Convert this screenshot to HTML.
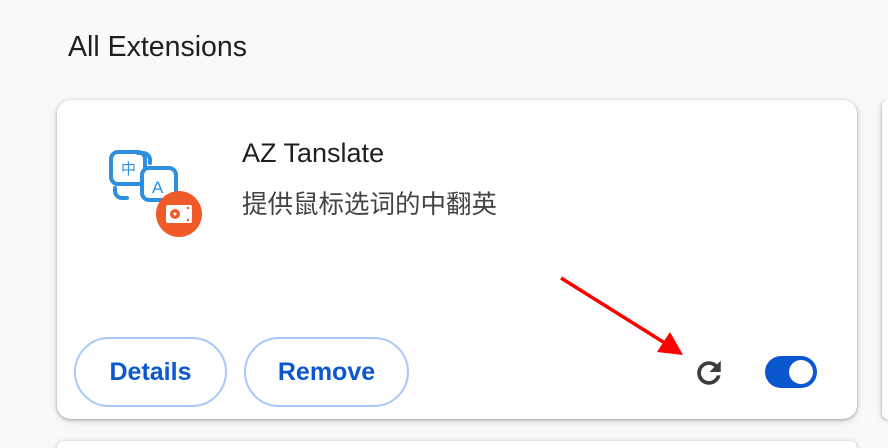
<!DOCTYPE html><html style="overflow:hidden;height:448px"><head><meta charset="utf-8"><style>
body{margin:0;width:888px;height:448px;background:#f8f9fa;font-family:"Liberation Sans","Noto Sans CJK SC",sans-serif;overflow:hidden;position:relative}
.h{position:absolute;left:68px;top:31px;font-size:28.5px;color:#1f1f1f}
.card{position:absolute;background:#fff;border-radius:14px;box-shadow:0 1px 3px rgba(0,0,0,.3),0 2px 8px rgba(0,0,0,.12)}
.btn{position:absolute;top:337px;height:70px;border:2px solid #a8c7fa;border-radius:36px;box-sizing:border-box;color:#0b57d0;font-weight:bold;font-size:25px;display:flex;align-items:center;justify-content:center}
</style></head><body>
<div class="h">All Extensions</div>
<div class="card" style="left:57px;top:100px;width:800px;height:319px"></div>
<div class="card" style="left:882px;top:100px;width:6px;height:319px;border-radius:14px 0 0 14px"></div>
<div class="card" style="left:57px;top:441px;width:800px;height:7px;border-radius:14px 14px 0 0"></div>
<svg style="position:absolute;left:100px;top:140px" width="110" height="100" viewBox="0 0 110 100">
<g fill="none" stroke="#2e8fe0" stroke-width="4" stroke-linecap="round">
<rect x="11" y="12" width="34" height="32" rx="7"/>
<path d="M38 13h5a7 7 0 0 1 7 7v3"/>
<rect x="42" y="28" width="34" height="32" rx="7" fill="#fff"/>
<path d="M15 48v3a7 7 0 0 0 7 7h5"/>
</g>
<text x="21" y="34" font-size="15" fill="#2e8fe0" font-family="Noto Sans CJK SC">中</text>
<text x="52" y="53" font-size="17" fill="#2e8fe0">A</text>
<circle cx="79" cy="74" r="23" fill="#f05a28"/>
<rect x="66" y="65" width="26" height="18" rx="2" fill="#fff"/>
<circle cx="75" cy="74" r="5" fill="#f05a28"/><circle cx="75" cy="74" r="1.5" fill="#fff"/>
<circle cx="88" cy="68" r="1.2" fill="#f05a28"/><circle cx="88" cy="80" r="1.2" fill="#f05a28"/>
</svg>
<div style="position:absolute;left:242px;top:138px;font-size:27px;color:#1f1f1f">AZ Tanslate</div>
<div style="position:absolute;left:242px;top:184px;font-size:25.5px;color:#444">提供鼠标选词的中翻英</div>
<div class="btn" style="left:74px;width:153px">Details</div>
<div class="btn" style="left:244px;width:165px">Remove</div>
<svg style="position:absolute;left:692px;top:356px" width="34" height="34" viewBox="0 0 24 24"><path fill="#3c3c3c" stroke="#3c3c3c" stroke-width=".6" d="M17.65 6.35A7.96 7.96 0 0 0 12 4a8 8 0 1 0 7.73 10h-2.08A6 6 0 1 1 12 6c1.66 0 3.14.69 4.22 1.78L13 11h7V4l-2.35 2.35z"/></svg>
<div style="position:absolute;left:765px;top:356px;width:52px;height:32px;border-radius:16px;background:#0b57d0"><div style="position:absolute;right:4px;top:4px;width:24px;height:24px;border-radius:50%;background:#fff"></div></div>
<svg style="position:absolute;left:0;top:0" width="888" height="448"><line x1="561" y1="278" x2="668" y2="345" stroke="#f00" stroke-width="3.5"/><polygon points="683,355 657,352 670,332" fill="#f00"/></svg>
</body></html>
